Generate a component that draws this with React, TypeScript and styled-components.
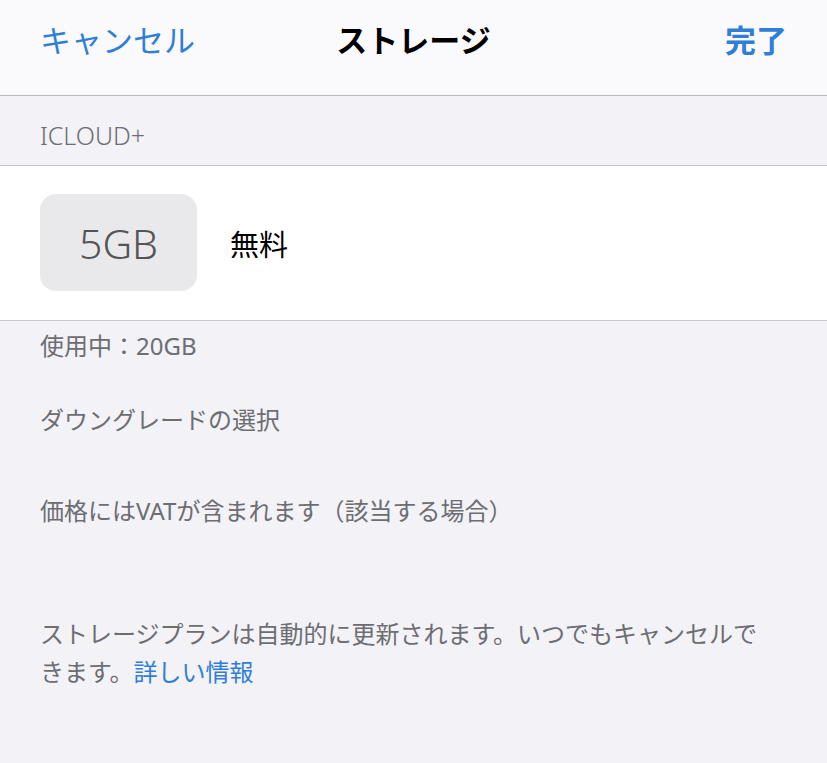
import styled, { createGlobalStyle } from "styled-components";

const GlobalStyle = createGlobalStyle`
  html, body {
    margin: 0;
    padding: 0;
    background: #f2f2f7;
  }
  body {
    font-family: "Noto Sans", "Noto Sans CJK JP", sans-serif;
    -webkit-font-smoothing: antialiased;
  }
`;

const Page = styled.div`
  width: 827px;
  min-height: 763px;
  background: #f2f2f7;
  overflow: hidden;
`;

const NavBar = styled.header`
  height: 96px;
  box-sizing: border-box;
  background: #fafafc;
  border-bottom: 1px solid #b9b9bd;
  display: grid;
  grid-template-columns: 1fr auto 1fr;
  align-items: start;
  padding: 17px 40px 0 40px;
`;

const NavButton = styled.button<{ $bold?: boolean; $align?: string }>`
  background: none;
  border: none;
  padding: 0;
  font-family: "Noto Sans CJK JP", sans-serif;
  font-size: 31px;
  line-height: 44px;
  font-weight: ${(p) => (p.$bold ? 700 : 400)};
  color: #2f7ed8;
  justify-self: ${(p) => p.$align || "start"};
  cursor: pointer;
`;

const Title = styled.h1`
  margin: 0;
  font-family: "Noto Sans CJK JP", sans-serif;
  font-size: 31px;
  line-height: 44px;
  font-weight: 700;
  color: #000;
`;

const SectionHeader = styled.div`
  padding: 22px 40px 13px;
  font-size: 25px;
  line-height: 34px;
  font-weight: 300;
  color: #6d6d72;
  border-bottom: 1px solid #c8c8cc;
`;

const PlanRow = styled.div`
  background: #fff;
  border-bottom: 1px solid #c8c8cc;
  display: flex;
  align-items: center;
  gap: 33px;
  padding: 28px 40px 29px;
`;

const Tile = styled.div`
  width: 157px;
  height: 97px;
  border-radius: 16px;
  background: #e9e9eb;
  display: flex;
  align-items: center;
  justify-content: center;
  font-size: 41px;
  font-weight: 300;
  color: #545456;
`;

const PlanLabel = styled.span`
  font-family: "Noto Sans CJK JP", sans-serif;
  font-size: 29px;
  color: #000;
`;

const Note = styled.p<{ $top: number }>`
  margin: ${(p) => p.$top}px 0 0;
  padding: 0 50px 0 40px;
  font-size: 24px;
  line-height: 38px;
  color: #6d6d72;
`;

const Link = styled.a`
  color: #2f7ed8;
  text-decoration: none;
`;

export default function App() {
  return (
    <Page>
      <GlobalStyle />
      <NavBar>
        <NavButton>キャンセル</NavButton>
        <Title>ストレージ</Title>
        <NavButton $bold $align="end">
          完了
        </NavButton>
      </NavBar>
      <SectionHeader>ICLOUD+</SectionHeader>
      <PlanRow>
        <Tile>5GB</Tile>
        <PlanLabel>無料</PlanLabel>
      </PlanRow>
      <Note $top={6}>使用中：20GB</Note>
      <Note $top={36}>ダウングレードの選択</Note>
      <Note $top={53}>価格にはVATが含まれます（該当する場合）</Note>
      <Note $top={85}>
        ストレージプランは自動的に更新されます。いつでもキャンセルできます。
        <Link href="#">詳しい情報</Link>
      </Note>
    </Page>
  );
}
